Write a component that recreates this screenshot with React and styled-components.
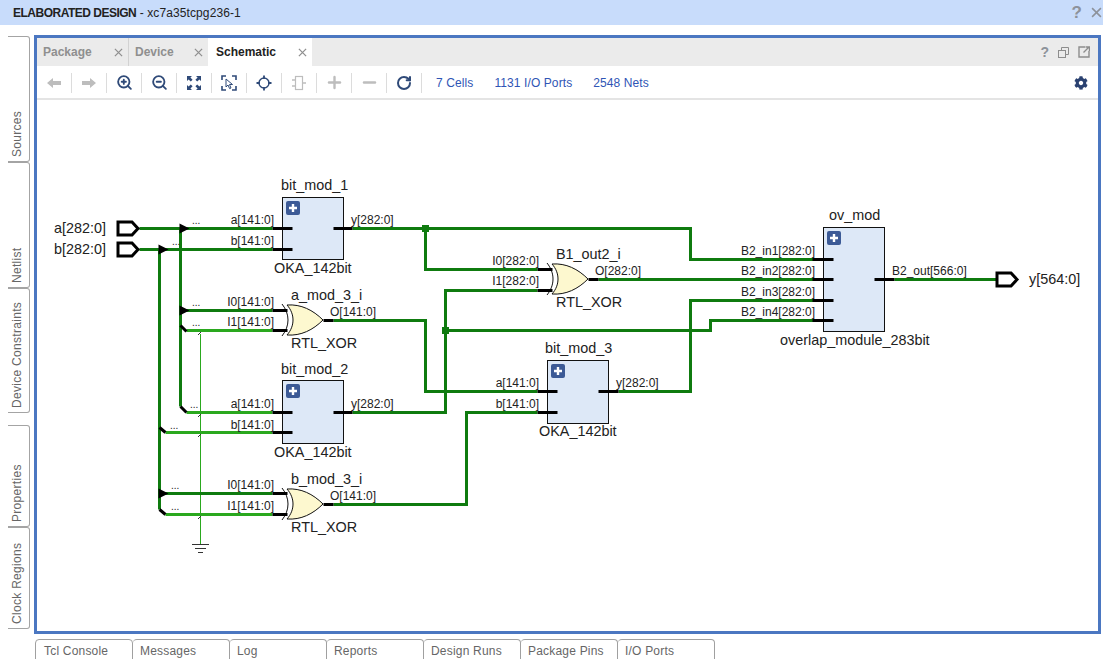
import styled, {createGlobalStyle} from "styled-components";
import {FaCog} from "react-icons/fa";
import {Minus, Plus, RotateCw, ZoomIn, ZoomOut} from "lucide-react";

const GlobalStyle = createGlobalStyle`
  html, body {
    margin: 0;
    padding: 0;
    background: #fff;
    overflow: hidden;
  }
  * {
    box-sizing: border-box;
  }
`;

const Page = styled.div`
  width: 1103px;
  height: 659px;
  overflow: hidden;
  display: flex;
  flex-direction: column;
  font-family: "Liberation Sans", Arial, sans-serif;
  font-size: 12px;
`;

const Header = styled.header`
  height: 25px;
  flex: none;
  display: flex;
  align-items: center;
  padding: 0 1px 0 13px;
  background: #c8dcfb;
  color: #222;
`;

const HeaderTitle = styled.b`
  white-space: pre;
  letter-spacing: -0.5px;
`;

const HeaderDevice = styled.span`
  letter-spacing: 0.1px;
`;

const HeaderActions = styled.div`
  margin-left: auto;
  display: flex;
  align-items: center;
  gap: 9px;
  color: #8d929a;
`;

const HelpMark = styled.span`
  font-weight: bold;
  font-size: ${({$size}) => $size}px;
  line-height: 1;
  color: #8d929a;
`;

const Body = styled.div`
  height: 609px;
  flex: none;
  padding-top: 10px;
  display: flex;
  align-items: flex-start;
`;

const Sidebar = styled.nav`
  width: 34px;
  flex: none;
  padding: 1px 0 0 8px;
  display: flex;
  flex-direction: column;
`;

/* turned by 180deg, so its left side is the one on the panel and its start is at the bottom */
const SideTab = styled.div`
  width: 22px;
  height: ${({$height}) => $height}px;
  margin-bottom: ${({$gap}) => $gap || 0}px;
  border: 1px solid #a4a4a4;
  border-right: 0;
  border-radius: 3px 0 0 3px;
  display: flex;
  align-items: center;
  justify-content: flex-start;
  padding: 4px 0 0 3px;
  writing-mode: vertical-rl;
  transform: rotate(180deg);
  color: #666;
  letter-spacing: 0.3px;
`;

const Panel = styled.main`
  width: 1067px;
  height: 599px;
  border: 3px solid #4b77c1;
  display: flex;
  flex-direction: column;
`;

const TabBar = styled.div`
  height: 28px;
  flex: none;
  display: flex;
  background: #ebebeb;
`;

const Tab = styled.div`
  width: ${({$width}) => $width}px;
  display: flex;
  align-items: center;
  justify-content: space-between;
  padding: 0 5px 0 ${({$pad}) => $pad}px;
  font-weight: bold;
  color: ${({$active}) => ($active ? "#222" : "#8f8f8f")};
  background: ${({$active}) => ($active ? "#fff" : "transparent")};
  border-right: ${({$divider}) => ($divider ? "1px solid #d2d2d2" : "0")};
`;

const WindowIcons = styled.div`
  margin-left: auto;
  display: flex;
  align-items: center;
  gap: 9px;
  padding-right: 8px;
`;

const Toolbar = styled.div`
  height: 34px;
  flex: none;
  display: flex;
  align-items: center;
  padding-top: 1px;
  border-bottom: 2px solid #e4e4e4;
`;

const ToolItem = styled.div`
  width: 35px;
  height: 20px;
  flex: none;
  display: flex;
  align-items: center;
  justify-content: center;
  border-right: 1px solid #dcdcdc;
  color: ${({$muted}) => ($muted ? "#bdbdbd" : "#2f4a78")};
`;

const Stats = styled.div`
  display: flex;
  gap: 21px;
  margin-left: 14px;
  color: #2f55b5;
  letter-spacing: 0.1px;
`;

const GearWrap = styled.div`
  margin-left: auto;
  padding-right: 10px;
  display: flex;
  color: #2a4170;
`;

const Canvas = styled.div`
  flex: 1;
  min-height: 0;
  background: #fff;
`;

const Sheet = styled.svg`
  display: block;
`;

const Label = styled.text`
  font-family: "Liberation Sans", Arial, sans-serif;
  font-size: ${({$size}) => $size || 12}px;
  fill: #222;
`;

const BottomTabs = styled.div`
  margin-top: 5px;
  padding-left: 35px;
  display: flex;
`;

const BottomTab = styled.div`
  width: ${({$first}) => ($first ? 98 : 97)}px;
  height: 24px;
  padding: 4px 0 0 ${({$first}) => ($first ? 8 : 7)}px;
  border: 1px solid #a0a0a0;
  border-left-width: ${({$first}) => ($first ? 1 : 0)}px;
  border-radius: 4px 4px 0 0;
  color: #666;
  letter-spacing: 0.2px;
`;

const DARK = "#0f7b0f";
const LIGHT = "#2aa81e";

// net routes in page pixels, the sheet's viewBox starts at the canvas corner
const darkNets = [
  "139,228 272,228",
  "139,249 272,249",
  "180,228 180,406",
  "159,249 159,509",
  "180,310 272,310",
  "159,493 272,493",
  "352,228 690,228 690,259 813,259",
  "425,228 425,269 537,269",
  "598,279 813,279",
  "537,290 445,290 445,412 352,412",
  "445,330 710,330 710,320 813,320",
  "333,320 425,320 425,391 537,391",
  "618,391 690,391 690,300 813,300",
  "537,412 466,412 466,504 333,504",
  "894,279 996,279",
];

const lightNets = [
  "186,330 272,330",
  "186,412 272,412",
  "165,432 272,432",
  "165,514 272,514",
];

const chamfers = [
  "180,325 186,331",
  "180,406 186,412",
  "159,427 165,432",
  "159,509 165,514",
];

const taps = [
  [180, 228],
  [159, 249],
  [180, 310],
  [159, 493],
];

const ticks = [412, 432, 514];

const pins = [
  "272,228 292,228",
  "272,249 292,249",
  "333,228 352,228",
  "272,310 287,310",
  "272,330 287,330",
  "323,320 333,320",
  "272,412 292,412",
  "272,432 292,432",
  "333,412 352,412",
  "272,493 287,493",
  "272,514 287,514",
  "323,504 333,504",
  "537,269 552,269",
  "537,290 552,290",
  "588,279 598,279",
  "537,391 557,391",
  "537,412 557,412",
  "598,391 618,391",
  "812,259 833,259",
  "812,279 833,279",
  "812,300 833,300",
  "812,320 833,320",
  "874,279 894,279",
];

const labels = [
  ["a[141:0]", 274, 224, "end"],
  ["b[141:0]", 274, 245, "end"],
  ["y[282:0]", 351, 224],
  ["I0[141:0]", 274, 306, "end"],
  ["I1[141:0]", 274, 326, "end"],
  ["O[141:0]", 330, 316],
  ["a[141:0]", 274, 408, "end"],
  ["b[141:0]", 274, 429, "end"],
  ["y[282:0]", 351, 408],
  ["I0[141:0]", 274, 489, "end"],
  ["I1[141:0]", 274, 510, "end"],
  ["O[141:0]", 330, 500],
  ["I0[282:0]", 539, 265, "end"],
  ["I1[282:0]", 539, 285, "end"],
  ["O[282:0]", 595, 275],
  ["a[141:0]", 539, 387, "end"],
  ["b[141:0]", 539, 408, "end"],
  ["y[282:0]", 616, 387],
  ["B2_in1[282:0]", 815, 255, "end"],
  ["B2_in2[282:0]", 815, 275, "end"],
  ["B2_in3[282:0]", 815, 296, "end"],
  ["B2_in4[282:0]", 815, 316, "end"],
  ["B2_out[566:0]", 892, 275],
];

const names = [
  ["a[282:0]", 54, 233],
  ["b[282:0]", 54, 254],
  ["y[564:0]", 1029, 284],
  ["bit_mod_1", 281, 190],
  ["OKA_142bit", 274, 273],
  ["a_mod_3_i", 291, 300],
  ["RTL_XOR", 291, 348],
  ["bit_mod_2", 281, 374],
  ["OKA_142bit", 274, 457],
  ["b_mod_3_i", 291, 484],
  ["RTL_XOR", 291, 532],
  ["B1_out2_i", 556, 259],
  ["RTL_XOR", 556, 307],
  ["bit_mod_3", 545, 353],
  ["OKA_142bit", 539, 436],
  ["ov_mod", 829, 220],
  ["overlap_module_283bit", 780, 345],
];

const dots = [
  [192, 224],
  [172, 245],
  [192, 306],
  [192, 326],
  [190, 408],
  [170, 429],
  [171, 489],
  [171, 510],
];

function Block({x, y, height}) {
  return (
    <g>
      <rect x={x + 0.5} y={y + 0.5} width={61} height={height} fill="#dde8f7" stroke="#111" />
      <rect x={x + 4} y={y + 4} width={14} height={14} rx={2} fill="#3c5a96" />
      <path d={`M${x + 7} ${y + 11}h8M${x + 11} ${y + 7}v8`} stroke="#fff" strokeWidth={2.4} />
    </g>
  );
}

function XorGate({x, y}) {
  return (
    <g transform={`translate(${x} ${y})`} stroke="#111" strokeWidth={1}>
      <path d="M-36 -15C-22 -16 -10 -10 0 0C-10 10 -22 16 -36 15C-28 6 -28 -6 -36 -15Z" fill="#fdf8cf" />
      <path d="M-41 -16C-33 -6 -33 6 -41 16" fill="none" />
    </g>
  );
}

function Port({x, y, width}) {
  return (
    <path
      d={`M${x} ${y - 6.5}h${width - 7}l6 6.5l-6 6.5h-${width - 7}Z`}
      fill="#fff"
      stroke="#000"
      strokeWidth={3}
    />
  );
}

function Schematic() {
  return (
    <Sheet width="1061" height="531" viewBox="37 100 1061 531">
      <g fill="none" stroke={LIGHT}>
        <polyline points="200.5,334 200.5,544" strokeWidth={1} />
        <path d="M192 544.5h17M195 548.5h11M198 552.5h5" strokeWidth={1} stroke="#333" />
        {ticks.map(y => (
          <path key={y} d={`M198 ${y + 5}l4 -4`} strokeWidth={1} stroke="#333" />
        ))}
        <path d="M198 335l4 -4" strokeWidth={1} stroke="#333" />
      </g>
      <g fill="none" strokeWidth={3} transform="translate(0.5 0.5)">
        {lightNets.map(points => (
          <polyline key={points} points={points} stroke={LIGHT} />
        ))}
        {darkNets.map(points => (
          <polyline key={points} points={points} stroke={DARK} />
        ))}
      </g>
      <rect x={422} y={225} width={7} height={7} fill={DARK} />
      <rect x={442} y={327} width={7} height={7} fill={DARK} />
      <Port x={118} y={228.5} width={21} />
      <Port x={118} y={249.5} width={21} />
      <Port x={997} y={279.5} width={21} />
      <Block x={282} y={197} height={62} />
      <Block x={282} y={380} height={63} />
      <Block x={547} y={360} height={63} />
      <Block x={823} y={227} height={104} />
      <XorGate x={323} y={320} />
      <XorGate x={323} y={504} />
      <XorGate x={588} y={279} />
      <g fill="none" stroke="#000" strokeWidth={3} transform="translate(0.5 0.5)">
        {chamfers.map(points => (
          <polyline key={points} points={points} />
        ))}
        {pins.map(points => (
          <polyline key={points} points={points} />
        ))}
      </g>
      {taps.map(([x, y]) => (
        <path key={`${x}-${y}`} d={`M${x - 0.5} ${y - 4.5}l10 5l-10 5Z`} fill="#000" />
      ))}
      {labels.map(([text, x, y, anchor]) => (
        <Label key={`${text}-${x}-${y}`} x={x} y={y} textAnchor={anchor || "start"}>
          {text}
        </Label>
      ))}
      {names.map(([text, x, y]) => (
        <Label key={`${text}-${x}-${y}`} x={x} y={y} $size={14.4}>
          {text}
        </Label>
      ))}
      {dots.map(([x, y]) => (
        <Label key={`${x}-${y}`} x={x} y={y} $size={10}>
          ...
        </Label>
      ))}
    </Sheet>
  );
}

function CloseIcon({size, color}) {
  return (
    <svg width={size} height={size} viewBox="0 0 10 10">
      <path d="M1 1L9 9M9 1L1 9" stroke={color} strokeWidth={1.4} fill="none" />
    </svg>
  );
}

function ArrowIcon({flip}) {
  return (
    <svg width="16" height="12" viewBox="0 0 16 12" style={flip ? {transform: "scaleX(-1)"} : undefined}>
      <path d="M1 6L7 1V4H15V8H7V11Z" fill="currentColor" />
    </svg>
  );
}

function FitIcon() {
  return (
    <svg width="16" height="16" viewBox="0 0 16 16" fill="currentColor">
      <path d="M1 1H6L4.4 2.6L6.6 4.8L4.8 6.6L2.6 4.4L1 6Z" />
      <path d="M15 1H10L11.6 2.6L9.4 4.8L11.2 6.6L13.4 4.4L15 6Z" />
      <path d="M1 15H6L4.4 13.4L6.6 11.2L4.8 9.4L2.6 11.6L1 10Z" />
      <path d="M15 15H10L11.6 13.4L9.4 11.2L11.2 9.4L13.4 11.6L15 10Z" />
    </svg>
  );
}

function SelectIcon() {
  return (
    <svg width="16" height="16" viewBox="0 0 16 16" fill="none" stroke="currentColor">
      <path d="M1 5V1H5M11 1H15V5M1 11V15H5M11 15H15V11" strokeWidth={1.6} />
      <path d="M5 4L11.5 9.5H8.5L10 13L8.6 13.6L7 10L5 12Z" strokeWidth={1} fill="#fff" />
    </svg>
  );
}

function TargetIcon() {
  return (
    <svg width="16" height="16" viewBox="0 0 16 16" fill="none" stroke="currentColor">
      <circle cx="8" cy="8" r="5" strokeWidth={1.4} />
      <path d="M8 0.5V4M8 12V15.5M0.5 8H4M12 8H15.5" strokeWidth={1.8} />
    </svg>
  );
}

function ChipIcon() {
  return (
    <svg width="16" height="16" viewBox="0 0 16 16" fill="none" stroke="currentColor">
      <rect x="4.5" y="1.5" width="7" height="13" strokeWidth={1.2} />
      <path d="M1 5H4M1 11H4M12 8H15" strokeWidth={1.4} />
    </svg>
  );
}

function RestoreIcon() {
  return (
    <svg width="11" height="11" viewBox="0 0 11 11" fill="none" stroke="#8d8d8d">
      <path d="M3.5 3V0.5H10.5V7.5H7.5" />
      <rect x="0.5" y="3.5" width="7" height="7" />
    </svg>
  );
}

function MaximizeIcon() {
  return (
    <svg width="12" height="12" viewBox="0 0 12 12" fill="none" stroke="#8d8d8d">
      <path d="M7 1H1V11H11V5" strokeWidth={1.4} />
      <path d="M5.5 6.5L11 1M7.5 1H11.5V5" strokeWidth={1.4} />
    </svg>
  );
}

const sideTabs = [
  {name: "Sources", height: 126},
  {name: "Netlist", height: 126},
  {name: "Device Constraints", height: 125, gap: 12},
  {name: "Properties", height: 102},
  {name: "Clock Regions", height: 102},
];

const bottomTabs = ["Tcl Console", "Messages", "Log", "Reports", "Design Runs", "Package Pins", "I/O Ports"];

export default function App() {
  return (
    <Page>
      <GlobalStyle />
      <Header>
        <HeaderTitle>ELABORATED DESIGN</HeaderTitle>
        <HeaderDevice>&nbsp;- xc7a35tcpg236-1</HeaderDevice>
        <HeaderActions>
          <HelpMark $size={17}>?</HelpMark>
          <CloseIcon size={11} color="#8d929a" />
        </HeaderActions>
      </Header>
      <Body>
        <Sidebar>
          {sideTabs.map(tab => (
            <SideTab key={tab.name} $height={tab.height} $gap={tab.gap}>
              {tab.name}
            </SideTab>
          ))}
        </Sidebar>
        <Panel>
          <TabBar>
            <Tab $width={92} $pad={6} $divider>
              Package
              <CloseIcon size={9} color="#8f8f8f" />
            </Tab>
            <Tab $width={79} $pad={6}>
              Device
              <CloseIcon size={9} color="#8f8f8f" />
            </Tab>
            <Tab $width={104} $pad={8} $active>
              Schematic
              <CloseIcon size={9} color="#8f8f8f" />
            </Tab>
            <WindowIcons>
              <HelpMark $size={14}>?</HelpMark>
              <RestoreIcon />
              <MaximizeIcon />
            </WindowIcons>
          </TabBar>
          <Toolbar>
            <ToolItem $muted><ArrowIcon /></ToolItem>
            <ToolItem $muted><ArrowIcon flip /></ToolItem>
            <ToolItem><ZoomIn size={17} strokeWidth={2.6} /></ToolItem>
            <ToolItem><ZoomOut size={17} strokeWidth={2.6} /></ToolItem>
            <ToolItem><FitIcon /></ToolItem>
            <ToolItem><SelectIcon /></ToolItem>
            <ToolItem><TargetIcon /></ToolItem>
            <ToolItem $muted><ChipIcon /></ToolItem>
            <ToolItem $muted><Plus size={19} strokeWidth={3} /></ToolItem>
            <ToolItem $muted><Minus size={19} strokeWidth={3} /></ToolItem>
            <ToolItem><RotateCw size={16} strokeWidth={3} /></ToolItem>
            <Stats>
              <span>7 Cells</span>
              <span>1131 I/O Ports</span>
              <span>2548 Nets</span>
            </Stats>
            <GearWrap>
              <FaCog size={14} />
            </GearWrap>
          </Toolbar>
          <Canvas>
            <Schematic />
          </Canvas>
        </Panel>
      </Body>
      <BottomTabs>
        {bottomTabs.map((name, index) => (
          <BottomTab key={name} $first={index === 0}>
            {name}
          </BottomTab>
        ))}
      </BottomTabs>
    </Page>
  );
}
